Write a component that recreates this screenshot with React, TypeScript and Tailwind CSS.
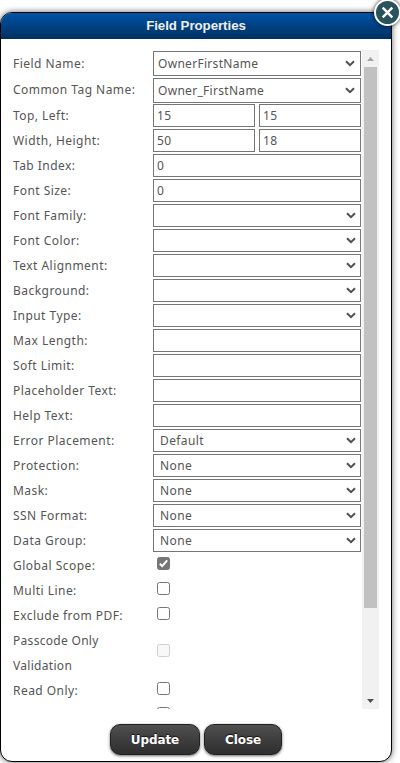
import React from "react";

type Kind = "select" | "input" | "pair" | "check";

interface Field {
  label: string;
  kind: Kind;
  value?: string;
  second?: string;
  checked?: boolean;
  disabled?: boolean;
  large?: boolean;
}

const fields: Field[] = [
  { label: "Field Name:", kind: "select", value: "OwnerFirstName", large: true },
  { label: "Common Tag Name:", kind: "select", value: "Owner_FirstName", large: true },
  { label: "Top, Left:", kind: "pair", value: "15", second: "15" },
  { label: "Width, Height:", kind: "pair", value: "50", second: "18" },
  { label: "Tab Index:", kind: "input", value: "0" },
  { label: "Font Size:", kind: "input", value: "0" },
  { label: "Font Family:", kind: "select" },
  { label: "Font Color:", kind: "select" },
  { label: "Text Alignment:", kind: "select" },
  { label: "Background:", kind: "select" },
  { label: "Input Type:", kind: "select" },
  { label: "Max Length:", kind: "input" },
  { label: "Soft Limit:", kind: "input" },
  { label: "Placeholder Text:", kind: "input" },
  { label: "Help Text:", kind: "input" },
  { label: "Error Placement:", kind: "select", value: "Default" },
  { label: "Protection:", kind: "select", value: "None" },
  { label: "Mask:", kind: "select", value: "None" },
  { label: "SSN Format:", kind: "select", value: "None" },
  { label: "Data Group:", kind: "select", value: "None" },
  { label: "Global Scope:", kind: "check", checked: true },
  { label: "Multi Line:", kind: "check" },
  { label: "Exclude from PDF:", kind: "check" },
  { label: "Passcode Only Validation", kind: "check", disabled: true },
  { label: "Read Only:", kind: "check" },
  { label: "", kind: "check" },
];

function SelectBox({ value, large }: { value?: string; large?: boolean }) {
  return (
    <div
      className={`flex w-[208px] items-center justify-between border border-[#767676] bg-white ${
        large ? "h-[25px] pl-[4px] pr-[5px]" : "h-[23px] pl-[6px] pr-[4px]"
      }`}
    >
      <span className={large ? "tracking-[0.3px]" : "tracking-[0.4px]"}>{value}</span>
      <svg width="10" height="7" viewBox="0 0 10 7" fill="none">
        <path d="M1 1.2L5 5.2L9 1.2" stroke="#505050" strokeWidth="2" />
      </svg>
    </div>
  );
}

function InputBox({ value, half }: { value?: string; half?: boolean }) {
  return (
    <div
      className={`flex h-[23px] items-center border border-[#767676] bg-white pl-[3px] tracking-[0.4px] ${
        half ? "w-[102px]" : "w-[208px]"
      }`}
    >
      {value}
    </div>
  );
}

function CheckBox({ checked, disabled }: { checked?: boolean; disabled?: boolean }) {
  const tone = checked
    ? "border-[#767676] bg-[#767676]"
    : disabled
      ? "border-[#cfcfcf] bg-[#f8f8f8]"
      : "border-[#767676] bg-white";
  return (
    <div
      className={`ml-1 flex size-[13px] items-center justify-center rounded-[2.5px] border ${tone} ${
        disabled ? "mt-[16px]" : "mt-[4px]"
      }`}
    >
      {checked && (
        <svg className="shrink-0" width="11" height="11" viewBox="0 0 11 11" fill="none">
          <path d="M1.8 5.7L4.2 8.1L9.2 2.3" stroke="#fff" strokeWidth="2" />
        </svg>
      )}
    </div>
  );
}

function Row({ field }: { field: Field }) {
  const first = field.label === "Field Name:";
  const height = first ? "h-[27px]" : field.large ? "h-[26px]" : field.disabled ? "h-[50px]" : "h-[25px]";
  return (
    <div className={`flex shrink-0 ${height}`}>
      <div className={`w-[140px] shrink-0 pr-5 leading-[25px] tracking-[0.46px] ${first ? "pt-px" : ""}`}>
        <span className={field.disabled ? "block tracking-[0.3px]" : "whitespace-nowrap"}>{field.label}</span>
      </div>
      {field.kind === "check" ? (
        <CheckBox checked={field.checked} disabled={field.disabled} />
      ) : (
        <div className="flex gap-1 pt-px">
          {field.kind === "select" && <SelectBox value={field.value} large={field.large} />}
          {field.kind === "input" && <InputBox value={field.value} />}
          {field.kind === "pair" && (
            <>
              <InputBox value={field.value} half />
              <InputBox value={field.second} half />
            </>
          )}
        </div>
      )}
    </div>
  );
}

function Scrollbar() {
  return (
    <div className="ml-px flex h-[659px] w-[17px] flex-col items-center bg-[#f1f1f1]">
      <div className="flex h-[17px] items-center justify-center">
        <svg width="7" height="4" viewBox="0 0 7 4">
          <path d="M0 4L3.5 0L7 4Z" fill="#a3a3a3" />
        </svg>
      </div>
      <div className="h-[541px] w-[13px] bg-[#c1c1c1]" />
      <div className="mt-auto flex h-[17px] items-center justify-center">
        <svg width="7" height="4" viewBox="0 0 7 4">
          <path d="M0 0L3.5 4L7 0Z" fill="#505050" />
        </svg>
      </div>
    </div>
  );
}

function ActionButton({ children, width }: { children: string; width: string }) {
  return (
    <button
      className={`h-[31px] ${width} rounded-[10px] border border-[#222] bg-linear-to-b from-[#4f4f4f] to-[#2e2e2e] pt-px font-['DejaVu_Sans',sans-serif] text-[12px] font-bold tracking-[-0.1px] text-white shadow-[0_1px_3px_rgba(0,0,0,0.6)] [text-shadow:0_-1px_1px_#111]`}
    >
      {children}
    </button>
  );
}

export default function App() {
  return (
    <div className="h-[763px] w-[400px] overflow-hidden bg-white pt-3 font-['Noto_Sans',sans-serif] text-[12px] text-[#555]">
      <div className="relative flex h-[750px] w-[392px] flex-col rounded-[12px] border border-black bg-white shadow-[0_0_6px_rgba(0,0,0,0.6)]">
        <div className="flex h-[26px] shrink-0 items-center justify-center rounded-t-[11px] bg-linear-to-b from-[#0053a6] to-[#003061] font-['Liberation_Sans',sans-serif] text-[13.3px] font-bold tracking-[-0.05px] text-[#eee]">
          Field Properties
        </div>
        <div className="mt-[11px] flex pl-3">
          <div className="flex h-[659px] w-[348px] flex-col overflow-hidden">
            {fields.map((field, index) => (
              <Row key={index} field={field} />
            ))}
          </div>
          <Scrollbar />
        </div>
        <div className="mt-[15px] flex justify-center gap-1">
          <ActionButton width="w-[90px]">Update</ActionButton>
          <ActionButton width="w-[78px]">Close</ActionButton>
        </div>
        <button
          aria-label="Close dialog"
          className="absolute -top-[14px] -right-[10px] flex size-[27px] items-center justify-center rounded-full border-2 border-white bg-[#2a525d] shadow-[0_0_4px_rgba(0,0,0,0.8)]"
        >
          <svg width="13" height="13" viewBox="0 0 13 13" fill="none">
            <path d="M1.7 1.7L11.3 11.3M11.3 1.7L1.7 11.3" stroke="#fff" strokeWidth="2.4" />
          </svg>
        </button>
      </div>
    </div>
  );
}
